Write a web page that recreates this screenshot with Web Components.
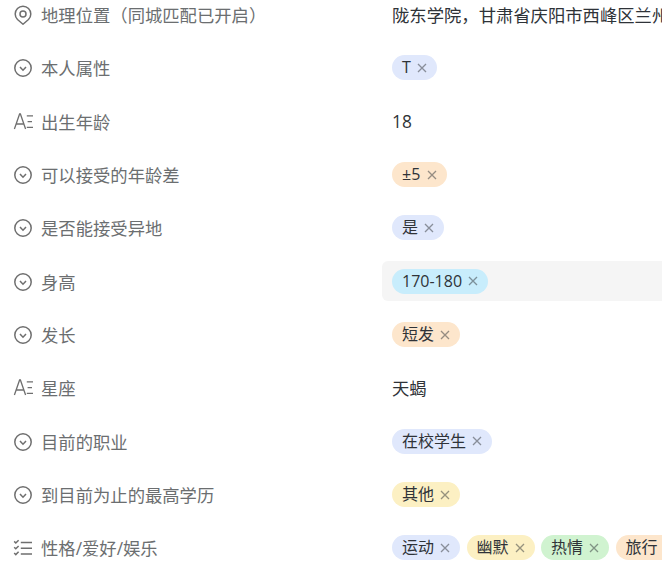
<!DOCTYPE html>
<html lang="zh">
<head>
<meta charset="utf-8">
<style>
  html, body { margin: 0; height: 100%; overflow: hidden; background: #fff; }
  body { font-family: "Open Sans", "Noto Sans CJK SC", sans-serif; }
</style>
</head>
<body>
<field-list>
  <field-row icon="pin" label="地理位置（同城匹配已开启）">陇东学院，甘肃省庆阳市西峰区兰州</field-row>
  <field-row icon="select" label="本人属性"><tag-pill color="blue">T</tag-pill></field-row>
  <field-row icon="text" label="出生年龄">18</field-row>
  <field-row icon="select" label="可以接受的年龄差"><tag-pill color="orange">±5</tag-pill></field-row>
  <field-row icon="select" label="是否能接受异地"><tag-pill color="blue">是</tag-pill></field-row>
  <field-row icon="select" label="身高" active><tag-pill color="cyan">170-180</tag-pill></field-row>
  <field-row icon="select" label="发长"><tag-pill color="orange">短发</tag-pill></field-row>
  <field-row icon="text" label="星座">天蝎</field-row>
  <field-row icon="select" label="目前的职业"><tag-pill color="blue">在校学生</tag-pill></field-row>
  <field-row icon="select" label="到目前为止的最高学历"><tag-pill color="yellow">其他</tag-pill></field-row>
  <field-row icon="multi" label="性格/爱好/娱乐">
    <tag-pill color="blue">运动</tag-pill>
    <tag-pill color="yellow">幽默</tag-pill>
    <tag-pill color="green">热情</tag-pill>
    <tag-pill color="orange">旅行</tag-pill>
  </field-row>
</field-list>

<script>
const ICONS = {
  pin: `<path d="M9 18.2 3.5 13.5A7.8 7.8 0 1 1 14.5 13.5Z" stroke-linejoin="round"/><circle cx="9" cy="8" r="3"/>`,
  select: `<circle cx="9" cy="9" r="8.2"/><path d="M6 8 9 11.2 12 8"/>`,
  text: `<path stroke-width="1.3" d="M.4 16 5.6 1h.8L11.6 16M2.4 11h7.2"/><path stroke-width="1.3" d="M12.8 2.8H19M13.6 8.7H18M12.8 14.3H19"/>`,
  multi: `<path d="M6.8 3.4H18M6.8 9.3H18M6.8 15H18"/><path d="M.2 2.4 1.8 4 4.6 1.2M.2 8.2 1.8 9.8 4.6 7M.2 14 1.8 15.6 4.6 12.8"/>`
};

class FieldIcon extends HTMLElement {
  constructor() {
    super();
    this.attachShadow({ mode: 'open' });
  }

  connectedCallback() {
    const name = this.getAttribute('name') || 'select';
    this.shadowRoot.innerHTML = `
      <style>
        :host { display: block; width: 18px; height: 18px; flex: none; margin-top: 1px; }
        svg { display: block; overflow: visible; fill: none; stroke: #6f6f6f; stroke-width: 1.5; }
      </style>
      <svg width="18" height="18" viewBox="0 0 18 18">${ICONS[name]}</svg>
    `;
  }
}

class TagPill extends HTMLElement {
  constructor() {
    super();
    this.attachShadow({ mode: 'open' });
    this.shadowRoot.innerHTML = `
      <style>
        :host {
          display: inline-flex;
          flex: none;
          align-items: center;
          gap: 6.4px;
          height: 25px;
          padding: 0 10px;
          border-radius: 13px;
          font-size: 16px;
          line-height: 25px;
          color: #2f3338;
          background: var(--pill-bg, #e0e8fc);
        }
        :host([color="blue"]) { --pill-bg: #e0e8fc; }
        :host([color="orange"]) { --pill-bg: #fde6cc; }
        :host([color="yellow"]) { --pill-bg: #fcf0c3; }
        :host([color="green"]) { --pill-bg: #d0f3d0; }
        :host([color="cyan"]) { --pill-bg: #c8edfc; }
        svg { display: block; stroke: #2f3338; stroke-opacity: .5; stroke-width: 1.3; }
      </style>
      <slot></slot>
      <svg width="10" height="10" viewBox="0 0 10 10"><path d="M1 1l8 8M9 1l-8 8"/></svg>
    `;
  }
}

class FieldRow extends HTMLElement {
  constructor() {
    super();
    this.attachShadow({ mode: 'open' });
  }

  connectedCallback() {
    this.shadowRoot.innerHTML = `
      <style>
        :host {
          display: grid;
          grid-template-columns: 382px 1fr;
          align-items: center;
          height: 53.33px;
          font-size: 17.33px;
        }
        .label {
          display: flex;
          align-items: center;
          gap: 9px;
          padding-left: 14px;
          color: #6b6e70;
          white-space: nowrap;
        }
        .value {
          display: flex;
          align-items: center;
          gap: 6.1px;
          height: 40px;
          padding-left: 10px;
          border-radius: 6px 0 0 6px;
          color: #2f3338;
          white-space: nowrap;
          overflow: hidden;
        }
        :host([active]) .value { background: #f5f5f5; }
      </style>
      <div class="label">
        <field-icon name="${this.getAttribute('icon')}"></field-icon>
        <span>${this.getAttribute('label')}</span>
      </div>
      <div class="value"><slot></slot></div>
    `;
  }
}

class FieldList extends HTMLElement {
  constructor() {
    super();
    this.attachShadow({ mode: 'open' });
    this.shadowRoot.innerHTML = `
      <style>
        :host { display: block; width: 662px; margin-top: -12px; }
      </style>
      <slot></slot>
    `;
  }
}

customElements.define('field-icon', FieldIcon);
customElements.define('tag-pill', TagPill);
customElements.define('field-row', FieldRow);
customElements.define('field-list', FieldList);
</script>
</body>
</html>
